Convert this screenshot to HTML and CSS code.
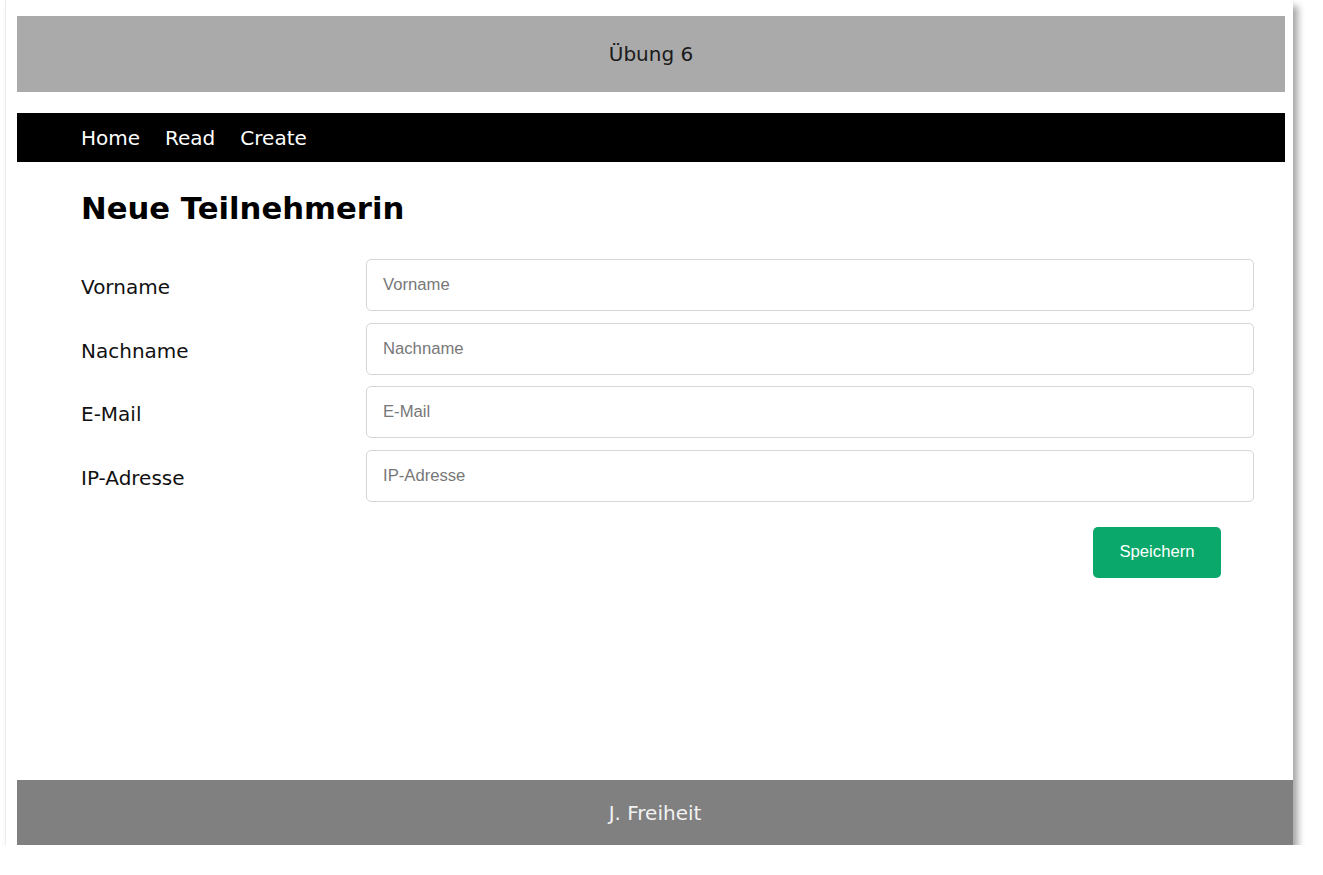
FILE: index.html
```html
<!DOCTYPE html>
<html lang="de">
<head>
<meta charset="utf-8">
<title>Übung 6</title>
<link rel="stylesheet" href="styles.css">
</head>
<body>
<div class="window">
  <header class="site-header">Übung 6</header>
  <nav class="site-nav">
    <a href="#">Home</a>
    <a href="#">Read</a>
    <a href="#">Create</a>
  </nav>
  <main class="content">
    <h1 class="title">Neue Teilnehmerin</h1>
    <form class="form">
      <div class="row">
        <label class="label" for="vorname">Vorname</label>
        <input class="input" id="vorname" type="text" placeholder="Vorname">
      </div>
      <div class="row">
        <label class="label" for="nachname">Nachname</label>
        <input class="input" id="nachname" type="text" placeholder="Nachname">
      </div>
      <div class="row">
        <label class="label" for="email">E-Mail</label>
        <input class="input" id="email" type="text" placeholder="E-Mail">
      </div>
      <div class="row">
        <label class="label" for="ip">IP-Adresse</label>
        <input class="input" id="ip" type="text" placeholder="IP-Adresse">
      </div>
      <div class="actions">
        <button class="btn" type="button">Speichern</button>
      </div>
    </form>
  </main>
  <footer class="site-footer">J. Freiheit</footer>
</div>
</body>
</html>
```

FILE: styles.css
```css
html, body {
  margin: 0;
  padding: 0;
  background: #ffffff;
}

body {
  font-family: "DejaVu Sans", Verdana, sans-serif;
  font-size: 20px;
  color: #111;
}

.window {
  box-sizing: border-box;
  margin-left: 5px;
  width: 1288px;
  height: 845px;
  padding: 16px 0 0 11px;
  display: flex;
  flex-direction: column;
  background: #fff;
  border-left: 1px solid #ececec;
  box-shadow: 5px 6px 7px rgba(0, 0, 0, 0.35);
}

.site-header {
  margin-right: 8px;
  height: 76px;
  background: #aaaaaa;
  display: flex;
  align-items: center;
  justify-content: center;
  color: #1a1a1a;
  font-size: 20px;
}

.site-nav {
  margin-top: 21px;
  margin-right: 8px;
  height: 49px;
  background: #000;
  display: flex;
  align-items: center;
  gap: 25px;
  padding-left: 64px;
}

.site-nav a {
  color: #fff;
  text-decoration: none;
  font-size: 20px;
}

.content {
  flex: 1;
  padding: 0 39px 0 64px;
}

.title {
  margin: 29px 0 33px 0;
  font-size: 30.7px;
  font-weight: bold;
  line-height: 35px;
  color: #000;
}

.form {
  display: flex;
  flex-direction: column;
  gap: 11.67px;
}

.row {
  display: flex;
  align-items: center;
}

.label {
  width: 285px;
  flex: none;
  font-size: 20px;
  color: #111;
  padding-top: 4px;
}

.input {
  flex: 1;
  box-sizing: border-box;
  height: 52px;
  border: 1px solid #d6d6d6;
  border-radius: 5px;
  padding: 0 16px;
  font-family: "Liberation Sans", Arial, sans-serif;
  font-size: 16.67px;
  color: #333;
  outline: none;
}

.input::placeholder {
  color: #777;
}

.actions {
  display: flex;
  justify-content: flex-end;
  padding-right: 33px;
  margin-top: 13px;
}

.btn {
  width: 128px;
  height: 51px;
  border: none;
  border-radius: 5px;
  background: #0aa86a;
  color: #fff;
  font-family: "Liberation Sans", Arial, sans-serif;
  font-size: 16.67px;
  cursor: pointer;
}

.site-footer {
  height: 65px;
  background: #808080;
  color: #f2f2f2;
  display: flex;
  align-items: center;
  justify-content: center;
  font-size: 20px;
}
```
